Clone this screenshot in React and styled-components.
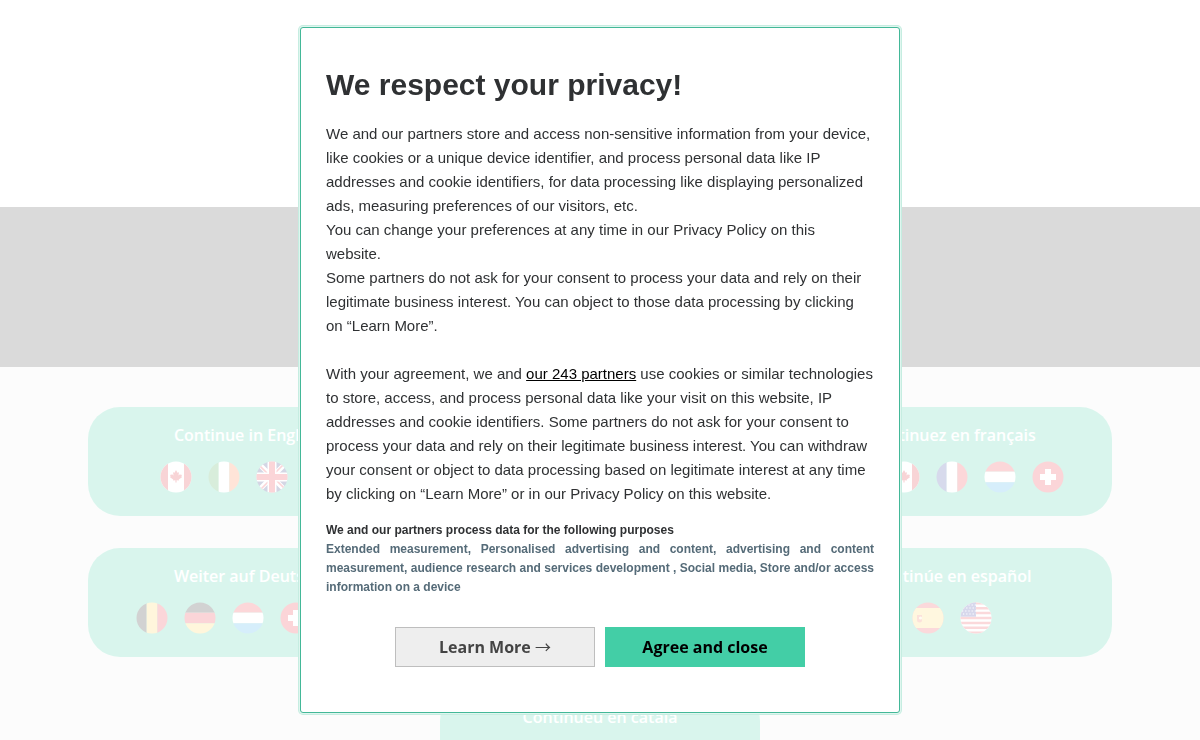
import { useId } from "react";
import styled, { createGlobalStyle } from "styled-components";

const languages = [
  { label: "Continue in English", column: 1, flags: ["ca", "ie", "gb", "us"] },
  { label: "Continuez en français", column: 3, flags: ["be", "ca", "fr", "lu", "ch"] },
  { label: "Weiter auf Deutsch", column: 1, flags: ["be", "de", "lu", "ch", "at"] },
  { label: "Continúe en español", column: 3, flags: ["es", "us"] },
  { label: "Continueu en català", column: 2, flags: ["es"] },
];

const stripes = {
  ie: { vertical: true, colors: ["#3fa54a", "#ffffff", "#ff7a3e"] },
  be: { vertical: true, colors: ["#222222", "#fdd34f", "#e83440"] },
  fr: { vertical: true, colors: ["#3a47a0", "#ffffff", "#f03844"] },
  de: { colors: ["#222222", "#e8303c", "#fdd34f"] },
  lu: { colors: ["#f03844", "#ffffff", "#36a8e8"] },
  at: { colors: ["#e83440", "#ffffff", "#e83440"] },
};

function Stripes({ vertical, colors }) {
  return colors.map((color, i) =>
    vertical ? (
      <rect key={i} x={i * 10.67} width="10.67" height="32" fill={color} />
    ) : (
      <rect key={i} y={i * 10.67} width="32" height="10.67" fill={color} />
    )
  );
}

function FlagArt({ code }) {
  if (stripes[code]) return <Stripes {...stripes[code]} />;

  switch (code) {
    case "ca":
      return (
        <>
          <rect width="32" height="32" fill="#ffffff" />
          <rect width="8" height="32" fill="#dc2a36" />
          <rect x="24" width="8" height="32" fill="#dc2a36" />
          <path
            d="M16 9L17.5 11.8L19 11.2L18.5 14.4L20.2 13L20.6 14L22 13.8L21.4 15.6L22 16.2L18.8 18.6L19 19.6L16.6 19.2V21.5H15.4V19.2L13 19.6L13.2 18.6L10 16.2L10.6 15.6L10 13.8L11.4 14L11.8 13L13.5 14.4L13 11.2L14.5 11.8Z"
            fill="#dc2a36"
          />
        </>
      );
    case "gb":
      return (
        <>
          <rect width="32" height="32" fill="#29337a" />
          <path d="M0 0l32 32M32 0L0 32" stroke="#ffffff" strokeWidth="5" />
          <path
            d="M0 1l14 14M31 0L17 14M32 31L18 17M1 32l14-14"
            stroke="#e8303c"
            strokeWidth="1.6"
          />
          <path d="M16 0v32M0 16h32" stroke="#ffffff" strokeWidth="9" />
          <path d="M16 0v32M0 16h32" stroke="#e8303c" strokeWidth="6" />
        </>
      );
    case "ch":
      return (
        <>
          <rect width="32" height="32" fill="#e8303c" />
          <path d="M16 8v16M8 16h16" stroke="#ffffff" strokeWidth="6" />
        </>
      );
    case "es":
      return (
        <>
          <rect width="32" height="32" fill="#e8404c" />
          <rect y="6" width="32" height="20" fill="#fdd860" />
          <path d="M5 13h5v5a2.5 2.5 0 0 1-5 0z" fill="#f06a4c" />
          <circle cx="8.5" cy="16" r="1.6" fill="#fff0c0" />
        </>
      );
    case "us":
      return (
        <>
          <rect width="32" height="32" fill="#ffffff" />
          <path
            d="M0 1.3h32M0 6.2h32M0 11.1h32M0 16h32M0 20.9h32M0 25.8h32M0 30.7h32"
            stroke="#e8404c"
            strokeWidth="2.5"
          />
          <rect width="16" height="14.7" fill="#3a3fa0" />
          <path
            d="M2 3h14M3 6h13M2 9h14M3 12h13"
            stroke="#ffffff"
            strokeWidth="1.2"
            strokeDasharray="1.2 2"
          />
        </>
      );
    default:
      return null;
  }
}

function Flag({ code }) {
  const clipId = useId();

  return (
    <FlagIcon viewBox="0 0 32 32" aria-hidden="true">
      <clipPath id={clipId}>
        <circle cx="16" cy="16" r="15.5" />
      </clipPath>
      <g clipPath={`url(#${clipId})`}>
        <FlagArt code={code} />
      </g>
    </FlagIcon>
  );
}

export default function App() {
  return (
    <>
      <GlobalStyle />

      <Page>
        <Header />
        <Banner />
        <Languages>
          {languages.map(({ label, column, flags }) => (
            <LanguageCard key={label} href="#" $column={column}>
              <LanguageLabel>{label}</LanguageLabel>
              <Flags>
                {flags.map((code) => (
                  <Flag key={code} code={code} />
                ))}
              </Flags>
            </LanguageCard>
          ))}
        </Languages>
      </Page>

      <Backdrop>
        <Dialog role="dialog" aria-modal="true" aria-labelledby="privacy-title">
          <Title id="privacy-title">We respect your privacy!</Title>

          <Text>
            We and our partners store and access non-sensitive information from
            your device, like cookies or a unique device identifier, and process
            personal data like IP addresses and cookie identifiers, for data
            processing like displaying personalized ads, measuring preferences
            of our visitors, etc.
            <br />
            You can change your preferences at any time in our Privacy Policy on
            this website.
            <br />
            Some partners do not ask for your consent to process your data and
            rely on their legitimate business interest. You can object to those
            data processing by clicking on “Learn More”.
          </Text>
          <Text>
            With your agreement, we and{" "}
            <PartnersLink href="#">our 243 partners</PartnersLink> use cookies
            or similar technologies to store, access, and process personal data
            like your visit on this website, IP addresses and cookie
            identifiers. Some partners do not ask for your consent to process
            your data and rely on their legitimate business interest. You can
            withdraw your consent or object to data processing based on
            legitimate interest at any time by clicking on “Learn More” or in
            our Privacy Policy on this website.
          </Text>

          <Purposes>
            <PurposesTitle>
              We and our partners process data for the following purposes
            </PurposesTitle>
            <PurposesList>
              Extended measurement, Personalised advertising and content,
              advertising and content measurement, audience research and
              services development , Social media, Store and/or access
              information on a device
            </PurposesList>
          </Purposes>

          <Actions>
            <Button type="button">
              Learn More <Arrow>→</Arrow>
            </Button>
            <Button type="button" $primary>
              Agree and close
            </Button>
          </Actions>
        </Dialog>
      </Backdrop>
    </>
  );
}

const GlobalStyle = createGlobalStyle`
  *,
  *::before,
  *::after {
    box-sizing: border-box;
  }

  body {
    margin: 0;
    overflow: hidden;
    background-color: #f0f0f0;
    font-family: "Open Sans", "Noto Sans", sans-serif;
  }
`;

const Page = styled.div`
  height: 100vh;
  overflow: hidden;
`;

const Header = styled.header`
  height: 207px;
  background-color: #ffffff;
`;

const Banner = styled.div`
  height: 160px;
  background-color: #484848;
`;

const Languages = styled.main`
  max-width: 1024px;
  margin: 0 auto;
  padding: 40px 0;

  display: grid;
  grid-template-columns: repeat(3, 1fr);
  gap: 32px;
`;

const LanguageCard = styled.a`
  grid-column: ${({ $column }) => $column};
  padding: 16px;

  display: flex;
  flex-direction: column;
  align-items: center;
  gap: 14px;

  border-radius: 32px;
  background-color: #43cea6;

  color: #ffffff;
  text-decoration: none;
`;

const LanguageLabel = styled.span`
  font-size: 16px;
  font-weight: 600;
  line-height: 24px;
`;

const Flags = styled.span`
  height: 39px;

  display: flex;
  gap: 16px;
`;

const FlagIcon = styled.svg`
  width: 32px;
  height: 32px;
`;

const Backdrop = styled.div`
  position: fixed;
  inset: 0;

  display: flex;
  align-items: center;
  justify-content: center;

  background-color: rgba(255, 255, 255, 0.8);
`;

const Dialog = styled.section`
  width: 100%;
  max-width: 600px;
  padding: 36px 25px 45px;

  border: 1px solid #43b898;
  border-radius: 3px;
  box-shadow: 0 0 0 1px #e0f6ef, 0 0 0 2px #c6ede1;
  background-color: #ffffff;

  color: #2f3133;
  font-family: "Liberation Sans", Arial, sans-serif;
`;

const Title = styled.h1`
  margin: 0 0 16px;

  font-size: 30px;
  font-weight: 700;
  line-height: 42px;
`;

const Text = styled.p`
  margin: 0;

  font-size: 15px;
  line-height: 24px;

  & + & {
    margin-top: 24px;
  }
`;

const PartnersLink = styled.a`
  color: #000000;
`;

const Purposes = styled.div`
  margin-top: 15px;

  font-size: 12px;
  font-weight: 700;
  line-height: 19px;
`;

const PurposesTitle = styled.p`
  margin: 0;
`;

const PurposesList = styled.p`
  margin: 0;

  color: #556b78;
  text-align: justify;
`;

const Actions = styled.div`
  margin-top: 30px;

  display: flex;
  justify-content: center;
  gap: 10px;
`;

const Button = styled.button`
  width: 200px;
  height: 40px;
  padding: 0;

  border: 1px solid ${({ $primary }) => ($primary ? "#43cea6" : "#bebebe")};
  background-color: ${({ $primary }) => ($primary ? "#43cea6" : "#eeeeee")};

  color: ${({ $primary }) => ($primary ? "#000000" : "#444444")};
  font-family: "Open Sans", "Noto Sans", sans-serif;
  font-size: 16px;
  font-weight: 700;
  line-height: 22px;
  cursor: pointer;
`;

const Arrow = styled.span`
  font-family: "Noto Sans CJK JP", sans-serif;
  font-weight: 400;
  line-height: 1;
`;
